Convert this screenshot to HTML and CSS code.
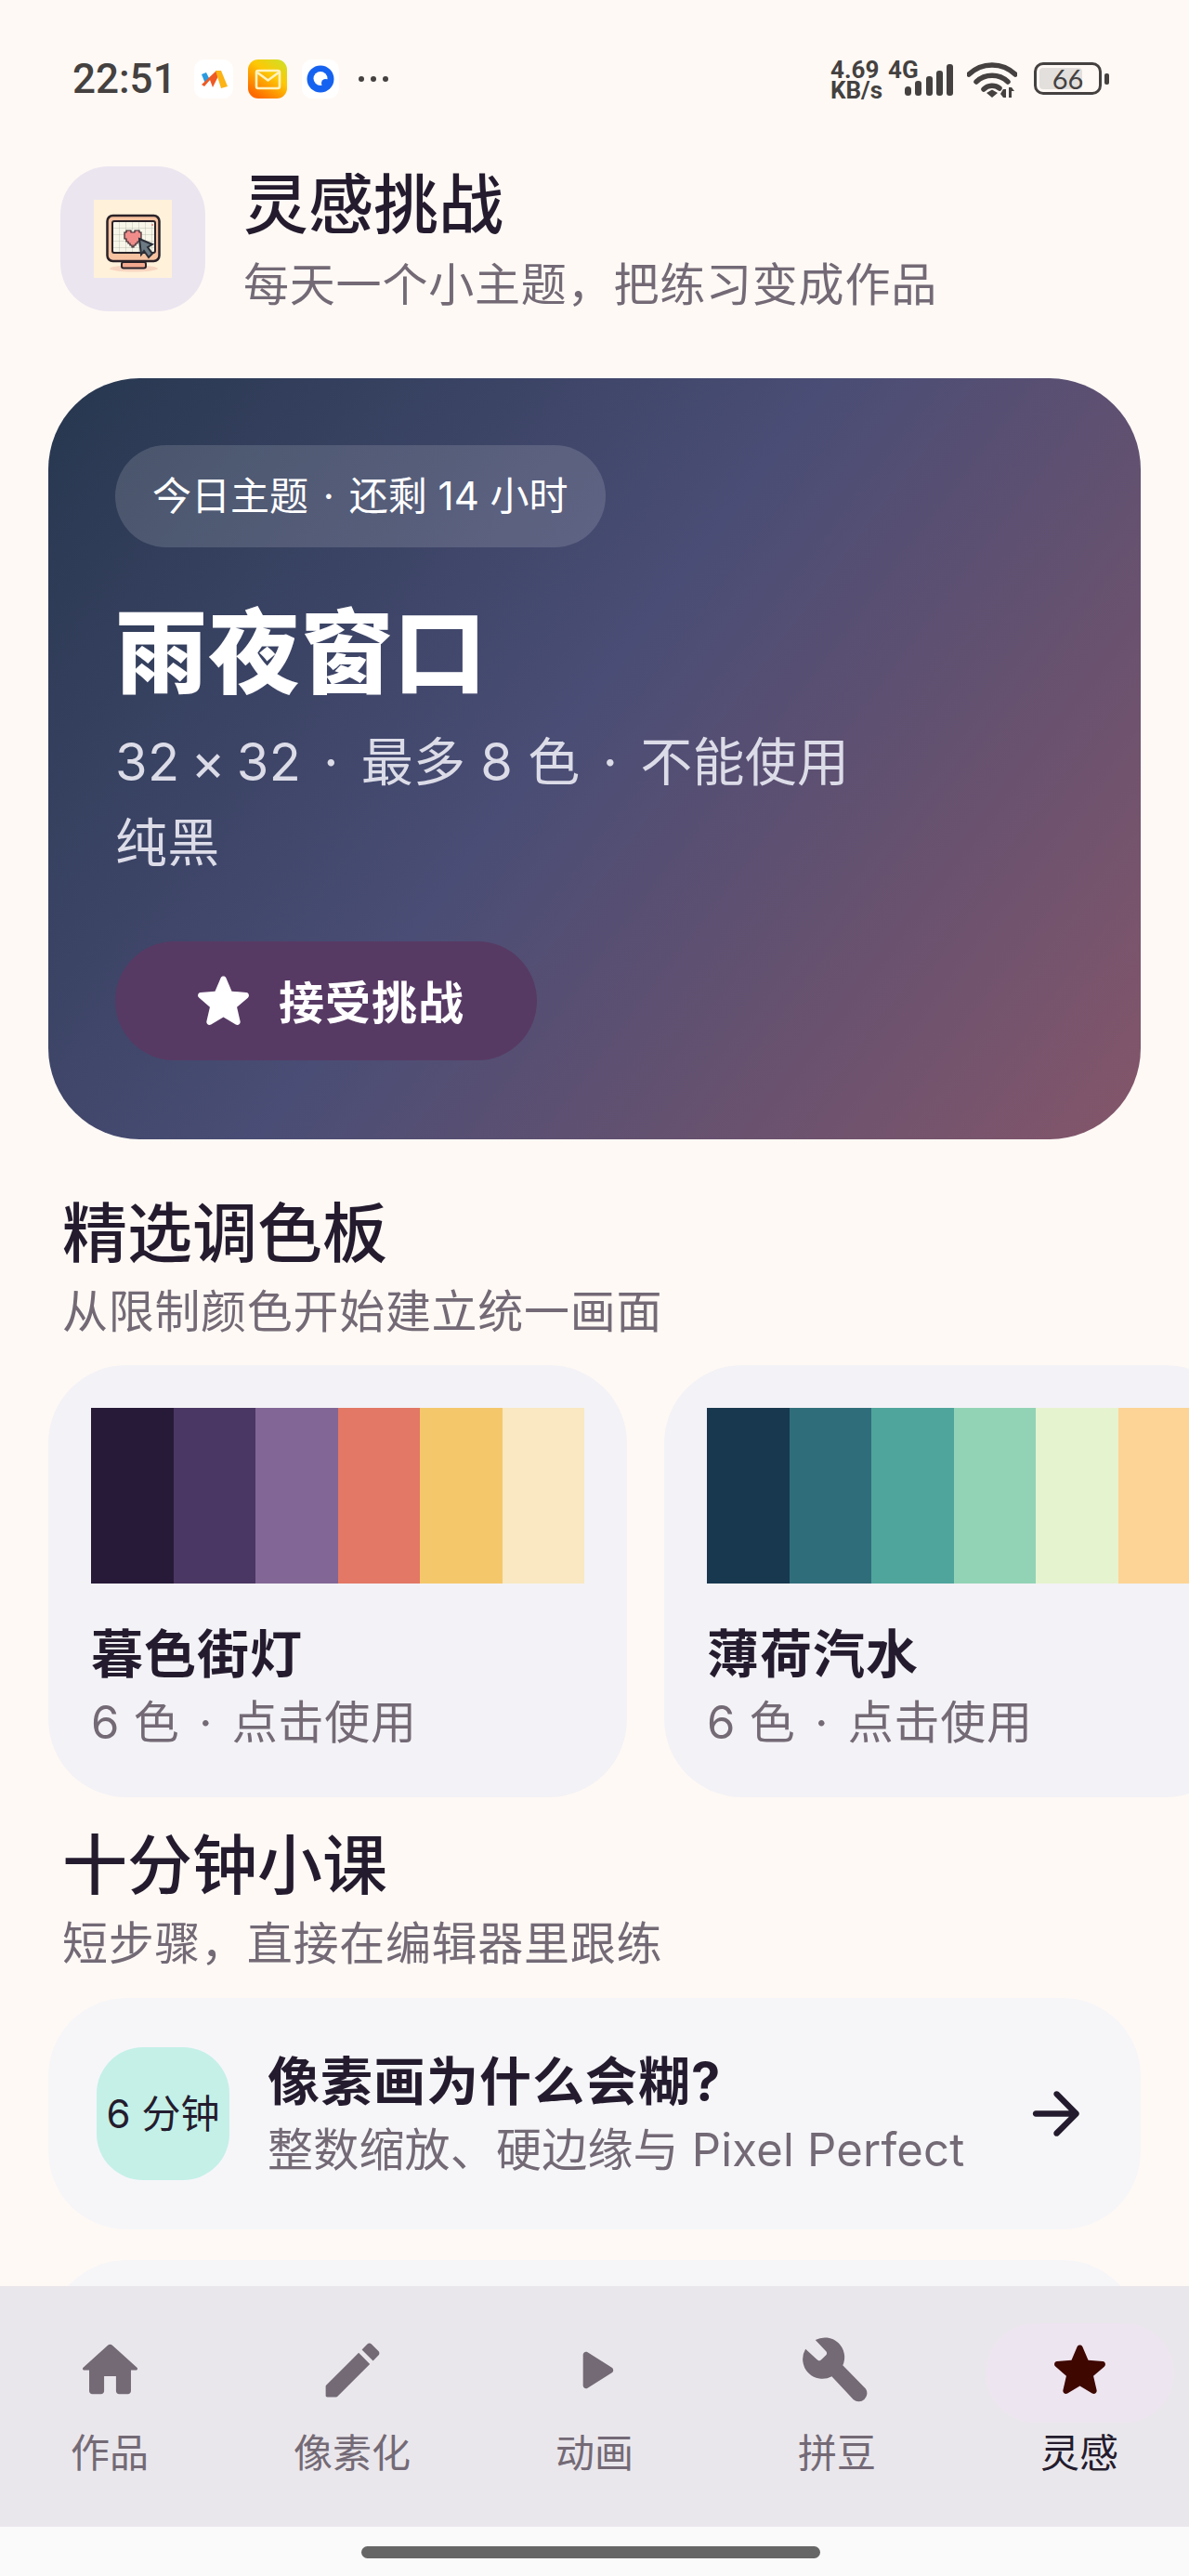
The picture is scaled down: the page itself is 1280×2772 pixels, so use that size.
FILE: index.html
```html
<!DOCTYPE html>
<html lang="zh-CN">
<head>
    <meta charset="UTF-8">
    <meta name="viewport" content="width=device-width, initial-scale=1.0">
    <title>灵感挑战</title>
    <link rel="stylesheet" href="styles.css">
</head>
<body>
    <div class="screen">
        <div class="status-bar">
            <div class="status-left">
                <span class="clock">22:51</span>
                <svg class="app-icon" viewBox="0 0 42 42">
                    <rect width="42" height="42" rx="11" fill="#fff"/>
                    <path d="M8 16l5-2 4 8-5 4z" fill="#2a9be0"/>
                    <path d="M8 27L24 12h5L20 30l-3-8-6 7z" fill="#ef5a24"/>
                    <path d="M23 12h6l7 17-7 2z" fill="#fbb316"/>
                </svg>
                <svg class="app-icon" viewBox="0 0 42 42">
                    <defs>
                        <linearGradient id="mail-bg" x1="1" y1="0" x2="0.3" y2="1">
                            <stop offset="0" stop-color="#c9e32c"/>
                            <stop offset="0.45" stop-color="#fdc806"/>
                            <stop offset="1" stop-color="#fd6a00"/>
                        </linearGradient>
                    </defs>
                    <rect width="42" height="42" rx="11" fill="url(#mail-bg)"/>
                    <rect x="9" y="12" width="25" height="19" rx="2" fill="none" stroke="#fff3c0" stroke-width="2.6"/>
                    <path d="M10 14l11.500 8.500L33 14" fill="none" stroke="#fff3c0" stroke-width="2.600"/>
                </svg>
                <svg class="app-icon narrow" viewBox="0 0 40 42">
                    <rect width="40" height="42" rx="11" fill="#fff"/>
                    <circle cx="20" cy="21" r="14.500" fill="#1662f0"/>
                    <circle cx="20" cy="20.500" r="7.500" fill="#fff"/>
                    <circle cx="25.500" cy="25.500" r="4.500" fill="#1662f0"/>
                </svg>
                <div class="more-dots"><i></i><i></i><i></i></div>
            </div>
            <div class="status-right">
                <div class="net-speed"><span>4.69</span><span>KB/s</span></div>
                <div class="signal">
                    <span class="net-type">4G</span>
                    <svg class="signal-bars" viewBox="0 0 52 34">
                        <rect x="0" y="24" width="7" height="10" rx="3.500"/>
                        <rect x="11" y="18" width="7" height="16" rx="3"/>
                        <rect x="23" y="13" width="7" height="21" rx="3"/>
                        <rect x="34" y="7" width="7" height="27" rx="3"/>
                        <rect x="45" y="0" width="7" height="34" rx="3"/>
                    </svg>
                </div>
                <svg class="wifi" viewBox="0 0 54 40">
                    <path d="M2 14a36 36 0 0 1 50 0" fill="none" stroke="#444140" stroke-width="5.500" stroke-linecap="round"/>
                    <path d="M10 22a25 25 0 0 1 34 0" fill="none" stroke="#444140" stroke-width="5.500" stroke-linecap="round"/>
                    <path d="M18 30a13 13 0 0 1 17 -1" fill="none" stroke="#444140" stroke-width="5.500" stroke-linecap="round"/>
                    <path d="M21 34l6 -3.500 6 3.500 -6 5z" fill="#444140"/>
                    <path d="M39 30h3v9h-3l-3-4zM45 28h3l3 4h-3v7h-3z" fill="#444140"/>
                </svg>
                <div class="battery">
                    <div class="battery-body"><div class="battery-fill"></div><span>66</span></div>
                    <div class="battery-nub"></div>
                </div>
            </div>
        </div>

        <div class="content">
            <div class="page-header">
                <div class="logo-box">
                    <svg class="logo-art" viewBox="0 0 84 84">
                        <defs>
                            <pattern id="pix-grid" width="7" height="7" patternUnits="userSpaceOnUse" x="20" y="23">
                                <path d="M7 0H0V7" fill="none" stroke="#a9ab9c" stroke-width="0.700"/>
                            </pattern>
                        </defs>
                        <rect width="84" height="84" fill="#fff1da"/>
                        <ellipse cx="43" cy="74" rx="26" ry="3.500" fill="#f8d5c0"/>
                        <rect x="30" y="67" width="26" height="6.500" rx="2" fill="#f3a98f" stroke="#2a2228" stroke-width="2"/>
                        <rect x="14.500" y="17" width="56" height="49" rx="6" fill="#f6c2a0" stroke="#2a2228" stroke-width="2.500"/>
                        <rect x="20" y="23" width="46" height="34" rx="2" fill="#f7f6e9" stroke="#2a2228" stroke-width="2"/>
                        <rect x="21" y="24" width="44" height="32" fill="url(#pix-grid)"/>
                        <path d="M35 33h5v2h4v-2h5v2h2v7h-2v3h-2v2h-2v2h-2v2h-2v-2h-2v-2h-2v-2h-2v-3h-2v-7h2z" fill="#f08d8b" stroke="#33262c" stroke-width="1.200"/>
                        <path d="M49 42l14 6-5 3 5 7-4 4-5-7-3 4z" fill="#6c7a84" stroke="#2a2f38" stroke-width="2"/>
                        <rect x="62" y="26" width="2" height="2" fill="#ea9a92"/>
                    </svg>
                </div>
                <div class="header-text">
                    <h1>灵感挑战</h1>
                    <p>每天一个小主题，把练习变成作品</p>
                </div>
            </div>

            <div class="hero-card">
                <div class="hero-chip">今日主题 <span class="dot">·</span> 还剩 14 小时</div>
                <div class="hero-title">雨夜窗口</div>
                <div class="hero-meta"><span class="size">32 × 32</span> <span class="dot">·</span> 最多 8 色 <span class="dot">·</span> 不能使用<br>纯黑</div>
                <div class="hero-button">
                    <svg class="icon" viewBox="0 0 24 24"><path d="M12 17.270l4.150 2.510c.76.46 1.690-.22 1.490-1.080l-1.100-4.720 3.670-3.180c.67-.58.31-1.680-.57-1.750l-4.830-.41-1.890-4.460c-.34-.81-1.500-.81-1.840 0L9.190 8.630l-4.830.41c-.88.07-1.240 1.170-.57 1.750l3.670 3.180-1.100 4.720c-.2.86.73 1.540 1.490 1.080l4.150-2.500z"/></svg>
                    <span class="hero-button-label">接受挑战</span>
                </div>
            </div>

            <div class="section-head first">
                <h2>精选调色板</h2>
                <p>从限制颜色开始建立统一画面</p>
            </div>
            <div class="palette-row">
                <div class="palette-card">
                    <div class="swatches">
                        <i class="sw-1"></i><i class="sw-2"></i><i class="sw-3"></i><i class="sw-4"></i><i class="sw-5"></i><i class="sw-6"></i>
                    </div>
                    <div class="palette-name">暮色街灯</div>
                    <div class="palette-sub">6 色 <span class="dot">·</span> 点击使用</div>
                </div>
                <div class="palette-card">
                    <div class="swatches">
                        <i class="sm-1"></i><i class="sm-2"></i><i class="sm-3"></i><i class="sm-4"></i><i class="sm-5"></i><i class="sm-6"></i>
                    </div>
                    <div class="palette-name">薄荷汽水</div>
                    <div class="palette-sub">6 色 <span class="dot">·</span> 点击使用</div>
                </div>
            </div>

            <div class="section-head">
                <h2>十分钟小课</h2>
                <p>短步骤，直接在编辑器里跟练</p>
            </div>
            <div class="lesson-card">
                <div class="lesson-time">6 分钟</div>
                <div class="lesson-text">
                    <div class="lesson-title">像素画为什么会糊?</div>
                    <div class="lesson-sub">整数缩放、硬边缘与 Pixel Perfect</div>
                </div>
                <svg class="icon arrow" viewBox="0 0 24 24"><path d="M5 13h11.170l-4.880 4.880c-.39.39-.39 1.030 0 1.420.39.39 1.020.39 1.410 0l6.590-6.590c.39-.39.39-1.020 0-1.410l-6.580-6.600c-.39-.39-1.020-.39-1.410 0-.39.39-.39 1.020 0 1.410L16.170 11H5c-.55 0-1 .45-1 1s.45 1 1 1z"/></svg>
            </div>
            <div class="lesson-card next"></div>
        </div>

        <div class="bottom-nav">
            <div class="nav-item">
                <div class="nav-icon"><svg class="icon" viewBox="0 0 24 24"><path d="M10 19v-5h4v5c0 .55.45 1 1 1h3c.55 0 1-.45 1-1v-7h1.700c.46 0 .68-.57.33-.87L12.670 3.600c-.38-.34-.96-.34-1.340 0l-8.360 7.530c-.34.3-.13.87.33.87H5v7c0 .55.45 1 1 1h3c.55 0 1-.45 1-1z"/></svg></div>
                <span>作品</span>
            </div>
            <div class="nav-item">
                <div class="nav-icon"><svg class="icon" viewBox="0 0 24 24"><path d="M3 17.460v3.040c0 .28.22.5.5.5h3.040c.13 0 .26-.05.35-.15L17.810 9.940l-3.750-3.750L3.150 17.100c-.1.1-.15.22-.15.36zM20.710 7.040c.39-.39.39-1.020 0-1.410l-2.340-2.340c-.39-.39-1.020-.39-1.410 0l-1.830 1.830 3.750 3.750 1.830-1.830z"/></svg></div>
                <span>像素化</span>
            </div>
            <div class="nav-item">
                <div class="nav-icon"><svg class="icon" viewBox="0 0 24 24"><path d="M8 6.820v10.360c0 .79.87 1.270 1.540.84l8.140-5.180c.62-.39.62-1.290 0-1.690L9.540 5.980C8.870 5.550 8 6.030 8 6.820z"/></svg></div>
                <span>动画</span>
            </div>
            <div class="nav-item">
                <div class="nav-icon"><svg class="icon" viewBox="0 0 24 24"><path d="M4.600 1.900A6.600 6.600 0 0 1 13.800 10.400L21.500 18.200A2.800 2.800 0 0 1 17.400 21.900L10.100 14.100A6.600 6.600 0 0 1 1.300 4.900L5.300 8.600Q5.900 9.100 6.500 8.600L8.200 6.900Q8.700 6.300 8.200 5.700Z"/></svg></div>
                <span>拼豆</span>
            </div>
            <div class="nav-item active">
                <div class="nav-icon"><svg class="icon" viewBox="0 0 24 24"><path d="M12 17.270l4.150 2.510c.76.46 1.690-.22 1.490-1.080l-1.100-4.720 3.670-3.180c.67-.58.31-1.680-.57-1.750l-4.830-.41-1.890-4.460c-.34-.81-1.500-.81-1.840 0L9.190 8.630l-4.830.41c-.88.07-1.240 1.170-.57 1.750l3.670 3.180-1.100 4.720c-.2.86.73 1.540 1.490 1.080l4.150-2.500z"/></svg></div>
                <span>灵感</span>
            </div>
        </div>
        <div class="gesture-bar"><div class="gesture-pill"></div></div>
    </div>
</body>
</html>
```

FILE: styles.css
```css
* {
    box-sizing: border-box;
}
body {
    margin: 0;
    background: #fff9f5;
    color: #241c2e;
    font-family: Inter, "Noto Sans CJK SC", sans-serif;
}
h1, h2, p {
    margin: 0;
    font-weight: normal;
}
.screen {
    width: 1280px;
    height: 2772px;
    display: flex;
    flex-direction: column;
    overflow: hidden;
}
.icon {
    display: block;
    width: 77px;
    height: 77px;
    fill: currentColor;
    flex-shrink: 0;
}
.dot {
    margin: 0 6px;
}

/* status bar */
.status-bar {
    height: 179px;
    flex-shrink: 0;
    padding: 64px 86px 0 78px;
    display: flex;
    justify-content: space-between;
    align-items: flex-start;
    color: #444140;
}
.status-left {
    display: flex;
    align-items: center;
    height: 42px;
}
.clock {
    width: 131px;
    font-family: Roboto, sans-serif;
    font-size: 44px;
    font-weight: 500;
    line-height: 42px;
}
.app-icon {
    width: 42px;
    height: 42px;
    margin-right: 16px;
}
.app-icon.narrow {
    width: 40px;
}
.more-dots {
    display: flex;
    gap: 7px;
    margin-left: 5px;
}
.more-dots i {
    width: 6px;
    height: 6px;
    border-radius: 50%;
    background: #444140;
}
.status-right {
    display: flex;
    align-items: flex-start;
}
.net-speed {
    display: flex;
    flex-direction: column;
    width: 62px;
    font-family: Roboto, sans-serif;
    font-size: 26px;
    font-weight: 700;
    line-height: 22px;
}
.signal {
    position: relative;
    width: 70px;
    height: 40px;
}
.net-type {
    position: absolute;
    left: 0;
    top: 0;
    font-family: Roboto, sans-serif;
    font-size: 26px;
    font-weight: 700;
    line-height: 22px;
}
.signal-bars {
    position: absolute;
    left: 18px;
    top: 5px;
    width: 52px;
    height: 34px;
    fill: #444140;
}
.wifi {
    width: 54px;
    height: 40px;
    margin: 2px 18px 0 15px;
}
.battery {
    display: flex;
    align-items: center;
    margin-top: 3px;
}
.battery-body {
    position: relative;
    width: 73px;
    height: 35px;
    border: 3px solid #444140;
    border-radius: 10px;
    padding: 3px;
}
.battery-fill {
    width: 46px;
    height: 100%;
    background: #e2dfdc;
    border-radius: 4px;
}
.battery-body span {
    position: absolute;
    left: 0;
    right: 0;
    top: 0;
    text-align: center;
    font-family: Lato, sans-serif;
    font-size: 29px;
    line-height: 29px;
}
.battery-nub {
    width: 5px;
    height: 12px;
    margin-left: 3px;
    border-radius: 2px;
    background: #444140;
}

/* header */
.content {
    flex: 1;
    min-height: 0;
    overflow: hidden;
}
.page-header {
    display: flex;
    align-items: flex-start;
    gap: 41px;
    padding-left: 65px;
    height: 156px;
}
.logo-box {
    width: 156px;
    height: 156px;
    border-radius: 52px;
    background: #ebe5f0;
    display: flex;
    align-items: center;
    justify-content: center;
}
.logo-art {
    width: 84px;
    height: 84px;
}
.header-text {
    padding-top: 7px;
}
.header-text h1 {
    font-size: 70px;
    font-weight: 500;
    line-height: 70px;
}
.header-text p {
    font-size: 49px;
    line-height: 56px;
    letter-spacing: 0.8px;
    color: #736a76;
    margin-top: 23px;
}

/* today's challenge */
.hero-card {
    margin: 72px 52px 0;
    height: 819px;
    padding: 72px 72px 0;
    border-radius: 98px;
    background: linear-gradient(127deg, #27374f 0%, #4a4d75 47%, #84566a 100%);
    color: #fff;
}
.hero-chip {
    display: inline-block;
    height: 110px;
    padding: 0 40px;
    border-radius: 55px;
    background: rgba(255, 255, 255, 0.14);
    font-size: 42px;
    line-height: 110px;
}
.hero-chip .dot {
    margin: 0 4px;
}
.hero-title {
    margin-top: 50px;
    font-size: 99px;
    font-weight: 900;
    line-height: 126px;
    letter-spacing: 1px;
}
.hero-meta {
    margin-top: 12px;
    font-size: 56px;
    line-height: 87px;
    letter-spacing: 0.3px;
    color: #dcdce8;
}
.hero-meta .dot {
    margin: 0 8px;
}
.hero-meta .size {
    word-spacing: -4px;
}
.hero-button {
    display: inline-flex;
    align-items: center;
    height: 128px;
    margin-top: 62px;
    padding: 0 78px;
    gap: 21px;
    border-radius: 64px;
    background: #573a64;
    font-size: 49px;
    font-weight: 700;
    letter-spacing: 1px;
}
.hero-button-label {
    padding-bottom: 4px;
}

/* sections */
.section-head {
    margin: 30px 0 0 67px;
}
.section-head.first {
    margin-top: 58px;
}
.section-head h2 {
    font-size: 70px;
    font-weight: 500;
    line-height: 88px;
}
.section-head p {
    margin-top: 5px;
    font-size: 49px;
    line-height: 70px;
    letter-spacing: 0.7px;
    color: #736a76;
}

/* palettes */
.palette-row {
    display: flex;
    gap: 40px;
    margin-top: 22px;
    padding-left: 52px;
}
.palette-card {
    width: 623px;
    height: 465px;
    flex-shrink: 0;
    padding: 46px;
    border-radius: 84px;
    background: #f3f2f6;
}
.swatches {
    display: flex;
    height: 189px;
}
.swatches i {
    flex: 1;
}
.sw-1 { background: #261a38; }
.sw-2 { background: #4a3763; }
.sw-3 { background: #826796; }
.sw-4 { background: #e27865; }
.sw-5 { background: #f5c76b; }
.sw-6 { background: #f9e8c1; }
.sm-1 { background: #18384f; }
.sm-2 { background: #306d7a; }
.sm-3 { background: #4fa59c; }
.sm-4 { background: #92d3b6; }
.sm-5 { background: #e6f3cf; }
.sm-6 { background: #fdd495; }
.palette-name {
    margin-top: 38px;
    font-size: 56px;
    font-weight: 700;
    line-height: 77px;
    letter-spacing: 1px;
}
.palette-sub {
    font-size: 49px;
    line-height: 70px;
    letter-spacing: 0.8px;
    color: #736a76;
}

/* lessons */
.lesson-card {
    display: flex;
    align-items: center;
    height: 249px;
    margin: 23px 52px 0;
    padding: 0 52px 0 52px;
    border-radius: 84px;
    background: #f6f6f9;
}
.lesson-card.next {
    margin-top: 33px;
}
.lesson-time {
    width: 143px;
    height: 143px;
    flex-shrink: 0;
    border-radius: 50px;
    background: #c4f0e8;
    font-size: 42px;
    line-height: 143px;
    text-align: center;
    white-space: nowrap;
}
.lesson-text {
    flex: 1;
    margin-left: 41px;
    padding-top: 5px;
}
.lesson-title {
    font-size: 56px;
    font-weight: 700;
    line-height: 70px;
    letter-spacing: 1px;
}
.lesson-sub {
    margin-top: 4px;
    font-size: 49px;
    line-height: 70px;
    letter-spacing: 0.2px;
    color: #736a76;
}

/* bottom navigation */
.bottom-nav {
    height: 259px;
    flex-shrink: 0;
    display: flex;
    justify-content: space-between;
    padding-top: 40px;
    background: #eae7ec;
    color: #736a76;
}
.nav-item {
    width: 236px;
    display: flex;
    flex-direction: column;
    align-items: center;
    font-size: 42px;
    line-height: 56px;
}
.nav-icon {
    width: 203px;
    height: 107px;
    border-radius: 54px;
    margin-bottom: 5px;
    padding-bottom: 6px;
    display: flex;
    align-items: center;
    justify-content: center;
}
.nav-item.active {
    color: #241c2e;
}
.nav-item.active .nav-icon {
    background: #ede5f0;
    color: #3e0700;
}
.gesture-bar {
    height: 53px;
    flex-shrink: 0;
    background: #fafafa;
    padding: 21px 0 0 389px;
}
.gesture-pill {
    width: 494px;
    height: 13px;
    border-radius: 7px;
    background: #666;
}
```
